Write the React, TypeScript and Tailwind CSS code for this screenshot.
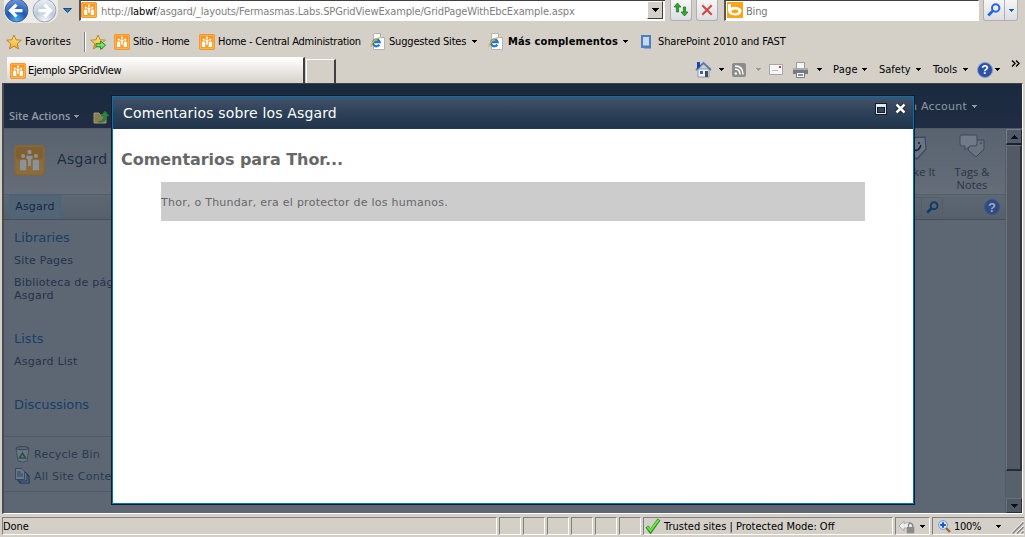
import React from "react";

const ui = "font-['DejaVu_Sans_Condensed','Liberation_Sans',sans-serif] text-[11px] leading-[14px]";
const verdana = "font-['DejaVu_Sans','Liberation_Sans',sans-serif]";

function Caret({ className = "" }: { className?: string }) {
  return (
    <svg width="5" height="3" viewBox="0 0 5 3" shapeRendering="crispEdges" className={`shrink-0 ${className}`}>
      <path d="M0 0h5v1H4v1H3v1H2V2H1V1H0z" fill="currentColor" />
    </svg>
  );
}

function SiteIcon({ size = 16, dim = false }: { size?: number; dim?: boolean }) {
  const edge = dim ? "#80653d" : "#ef8a18";
  const inner = dim ? "#8a6d3d" : "#f9a12c";
  const man = dim ? "#8c929a" : "#fff";
  return (
    <svg width={size} height={size} viewBox="0 0 30 30" className="shrink-0">
      <rect x="0.7" y="0.7" width="28.6" height="28.6" rx="3" fill={inner} stroke={edge} strokeWidth="1.5" />
      <rect x="2" y="2" width="26" height="12" rx="2" fill={dim ? "#80602f" : "#ff9420"} />
      {!dim && <rect x="2.6" y="2.6" width="24.8" height="24.8" rx="1" fill="none" stroke="#ffc56b" strokeWidth="1.2" />}
      <g fill={man}>
        <circle cx="15" cy="6.8" r="2.1" />
        <circle cx="8.8" cy="10.6" r="2" />
        <circle cx="21.2" cy="10.6" r="2" />
        <path d="M12 10.3h6v3l-1.6 1v6h-2.800v-6l-1.600-1z" />
        <path d="M5.800 16q0-1.800 1.800-1.800h2.400q1.800 0 1.800 1.800v8.500H5.800zM18.200 16q0-1.800 1.800-1.800h2.400q1.800 0 1.800 1.800v8.500h-6z" />
      </g>
    </svg>
  );
}

function Star({ plus = false }: { plus?: boolean }) {
  return (
    <svg width="16" height="16" viewBox="0 0 16 16" className="shrink-0">
      <defs>
        <linearGradient id="star" x1="0" y1="0" x2="0" y2="1">
          <stop offset="0" stopColor="#fff0a0" />
          <stop offset="1" stopColor="#f5a81c" />
        </linearGradient>
      </defs>
      <path d="M8 1l2 4.800 5.300.4-4 3.500 1.200 5.200L8 12.200l-4.500 2.700 1.200-5.200-4-3.500 5.300-.4z" fill="url(#star)" stroke="#bd7d1c" strokeWidth=".9" />
      {plus && <path d="M6 9.700h4.600V7L15.600 11.200 10.600 15.400v-2.700H6z" fill="#7be070" stroke="#1f8c25" />}
    </svg>
  );
}

function IePage() {
  return (
    <svg width="16" height="17" viewBox="0 0 16 17" className="shrink-0">
      <path d="M3.500.5h7l4 4v12h-11z" fill="#fff" stroke="#b4b4b4" />
      <path d="M10.500.5v4h4" fill="#ddd" stroke="#aaa" />
      <path d="M9.300 11.600A3.400 3.400 0 1 1 9.700 9.200H3.500" fill="none" stroke="#2078cf" strokeWidth="2.200" />
      <path d="M1.600 13.700C-.8 12 6 4.300 10.500 4.900" fill="none" stroke="#e6b22d" strokeWidth="1.300" />
    </svg>
  );
}

function NavButton({ back = false }: { back?: boolean }) {
  return (
    <svg width="25" height="24" viewBox="0 0 25 24" className="shrink-0">
      <defs>
        <radialGradient id="nb" cx=".5" cy=".95" r=".9">
          <stop offset="0" stopColor="#47b5f6" />
          <stop offset=".5" stopColor="#1d57b4" />
          <stop offset="1" stopColor="#6b93d4" />
        </radialGradient>
        <radialGradient id="nf" cx=".5" cy=".95" r=".9">
          <stop offset="0" stopColor="#f4f8fb" />
          <stop offset=".5" stopColor="#bdc9d7" />
          <stop offset="1" stopColor="#e8edf3" />
        </radialGradient>
      </defs>
      <circle cx="12.500" cy="10.500" r="11.400" fill={back ? "url(#nb)" : "url(#nf)"} stroke={back ? "#3e5c8f" : "#9aa5b3"} />
      <path
        d={back ? "M12.500 4.600L6.500 10.600l6 6M7.500 10.600h11" : "M12.500 4.600l6 6-6 6M17.500 10.600h-11"}
        fill="none"
        stroke="#fff"
        strokeWidth="3.200"
      />
    </svg>
  );
}

function Magnifier({ color, size = 14 }: { color: string; size?: number }) {
  return (
    <svg width={size} height={size} viewBox="0 0 14 14" className="shrink-0">
      <circle cx="8.700" cy="5" r="3.700" fill="none" stroke={color} strokeWidth="2" />
      <path d="M6 7.600L1.300 12.500" stroke={color} strokeWidth="2.800" />
    </svg>
  );
}

function HelpBadge({ dim = false }: { dim?: boolean }) {
  return (
    <span
      className={
        dim
          ? "flex h-4 w-4 items-center justify-center rounded-full border border-[#3b568b] bg-[#2d4a82] font-['Liberation_Sans',sans-serif] text-[13px] font-bold leading-none text-[#a0aabd]"
          : "flex h-4 w-4 items-center justify-center rounded-full border border-[#8da0c6] bg-[#2a50a8] font-['Liberation_Sans',sans-serif] text-[12px] font-bold leading-none text-white"
      }
    >
      ?
    </span>
  );
}

function AddressRow() {
  return (
    <div className="flex h-6 items-start">
      <div className="ml-1 flex h-[23px] w-[54px] rounded-b-[12px] bg-[#ecebe8]">
        <NavButton back />
        <span className="ml-[3px] flex"><NavButton /></span>
      </div>
      <svg width="9" height="5" viewBox="0 0 9 5" className="ml-[5px] mt-2">
        <path d="M.5.5h8l-4 4z" fill="#2b7fc0" stroke="#1b4d7d" />
      </svg>
      <div className="ml-[7px] flex h-[21px] w-[586px] items-start border-b border-l-2 border-b-white border-l-[#555] border-t border-t-[#404040] bg-white">
        <div className="mt-px flex"><SiteIcon /></div>
        <div className={`${ui} ml-[4px] mt-1 grow whitespace-nowrap tracking-[-0.128px] text-[#808080]`}>
          http://<span className="text-black">labwf</span>/asgard/_layouts/Fermasmas.Labs.SPGridViewExample/GridPageWithEbcExample.aspx
        </div>
        <div className="mr-[2px] flex h-[18px] w-4 items-center justify-center border border-b-[#404040] border-l-white border-r-[#404040] border-t-white bg-[#d4d0c8]">
          <svg width="7" height="4" viewBox="0 0 7 4" shapeRendering="crispEdges"><path d="M0 0h7v1H6v1H5v1H4v1H3V3H2V2H1V1H0z" /></svg>
        </div>
      </div>
      <div className="ml-[5px] flex h-[21px] w-[22px] items-center justify-center rounded-b-[3px] border border-t-0 border-[#aeb0b8] bg-gradient-to-b from-[#f6f6f6] to-[#dedee2]">
        <svg width="16" height="16" viewBox="0 0 16 16">
          <path d="M4.500 1L8 5H5.600v5H3.400V5H1z" fill="#2eaa2b" stroke="#17701a" strokeWidth=".7" />
          <path d="M11.500 14L15 10h-2.400V5h-2.200v5H8z" fill="#2eaa2b" stroke="#17701a" strokeWidth=".7" />
        </svg>
      </div>
      <div className="ml-[4px] flex h-[21px] w-[22px] items-center justify-center rounded-b-[3px] border border-t-0 border-[#aeb0b8] bg-gradient-to-b from-[#f6f6f6] to-[#dedee2]">
        <svg width="12" height="12" viewBox="0 0 12 12"><path d="M1.300 1.300l9.400 9.400M10.700 1.300L1.300 10.700" stroke="#d14a4a" strokeWidth="2.200" /></svg>
      </div>
      <div className="ml-[6px] flex h-[21px] w-[255px] items-start border-b border-l-2 border-r border-t border-b-white border-l-[#555] border-r-white border-t-[#404040] bg-white">
        <svg width="16" height="16" viewBox="0 0 16 16" className="ml-[1px] mt-px">
          <path d="M0 0h16v16H0z" fill="#ffa415" />
          <path d="M1 2h3v3.500Q8 4 11.500 5.500Q15 7 14.500 9.500Q13.500 13.500 8 13.500Q1 13 1 8z" fill="#fff" />
          <ellipse cx="8" cy="9.300" rx="3.400" ry="1.900" fill="#ffa415" />
        </svg>
        <span className={`${ui} ml-[3px] mt-1 tracking-[-0.2px] text-[#777]`}>Bing</span>
      </div>
      <div className="ml-[4px] flex h-[21px] w-[35px] rounded-b-[3px] border border-t-0 border-[#aeb0b8] bg-gradient-to-b from-[#f6f6f6] to-[#dedee2]">
        <span className="flex w-[21px] items-center justify-center border-r border-[#aeb0b8]"><Magnifier color="#2466df" /></span>
        <span className="flex grow items-center justify-center"><Caret className="text-[#1462b0]" /></span>
      </div>
    </div>
  );
}

function FavoritesRow() {
  return (
    <div className={`${ui} flex h-8 items-center whitespace-nowrap pl-[6px] pt-[3px]`}>
      <Star />
      <span className="ml-[3px] w-[59px] tracking-[0.15px]">Favorites</span>
      <span className="h-5 w-[2px] border-l border-r border-l-[#808080] border-r-white" />
      <span className="ml-[4px] flex"><Star plus /></span>
      <span className="ml-[8px] flex"><SiteIcon /></span>
      <span className="ml-[3px] w-[66px] pt-px tracking-[-0.38px]">Sitio - Home</span>
      <SiteIcon />
      <span className="ml-[3px] w-[152px] pt-px tracking-[-0.27px]">Home - Central Administration</span>
      <IePage />
      <span className="ml-[3px] w-[83px] pt-px tracking-[-0.18px]">Suggested Sites</span>
      <Caret />
      <span className="ml-[11px] flex"><IePage /></span>
      <span className="ml-[4px] w-[115px] pt-px font-bold tracking-[0.15px]">Más complementos</span>
      <Caret />
      <svg width="11" height="14" viewBox="0 0 11 14" className="ml-[13px]">
        <path d="M1 1h8v10.500H1z" fill="#c9d9ec" stroke="#4c7fbf" strokeWidth="2" />
        <path d="M3 11.500h7v2H3zM0 11h3v2H0z" fill="#4c7fbf" />
      </svg>
      <span className="ml-[6px] pt-px tracking-[-0.1px]">SharePoint 2010 and FAST</span>
    </div>
  );
}

function TabRow() {
  return (
    <div className={`${ui} flex h-[27px] items-end whitespace-nowrap pl-[7px]`}>
      <div className="flex h-[26px] w-[298px] items-center border-r-2 border-t border-r-[#404040] border-t-white bg-gradient-to-b from-white to-[#d6d2ca] pl-[3px]">
        <SiteIcon />
        <span className="ml-[2px] pt-px tracking-[-0.35px]">Ejemplo SPGridView</span>
      </div>
      <div className="ml-[1px] h-6 w-[30px] border-l border-r-2 border-t border-l-white border-r-[#404040] border-t-white" />
      <div className="ml-auto flex h-[27px] items-center">
        <svg width="17" height="17" viewBox="0 0 17 17">
          <path d="M3 8h11v8H3z" fill="#eef2f7" stroke="#8b97a8" />
          <path d="M1 9L8.500 2 16 9" fill="none" stroke="#5879ae" strokeWidth="1.800" />
          <path d="M2 1h3v5l-3 2z" fill="#1b42b8" />
          <path d="M5 10h3v3H5z" fill="#3262bd" /><path d="M10 10h3v6h-3z" fill="#36516d" />
        </svg>
        <Caret className="ml-[7px]" />
        <svg width="14" height="14" viewBox="0 0 14 14" className="ml-[8px]">
          <rect width="14" height="14" rx="2" fill="#8c8c8c" />
          <path d="M3 6q5 0 5 5.500M3 3q8 0 8 8.500" fill="none" stroke="#fff" strokeWidth="1.500" /><circle cx="3.800" cy="10.500" r="1.200" fill="#fff" />
        </svg>
        <Caret className="ml-[10px] text-[#999]" />
        <svg width="14" height="11" viewBox="0 0 14 11" className="ml-[8px]">
          <path d="M.5.5h13v10H.5z" fill="#f8f8f8" stroke="#a5a5a5" /><path d="M10 2h2v2h-2z" fill="#d33" /><path d="M3 6.500h6" stroke="#bbb" />
        </svg>
        <svg width="17" height="16" viewBox="0 0 17 16" className="ml-[9px]">
          <path d="M4.500.5h8V7h-8z" fill="#f5f5f5" stroke="#999" />
          <path d="M1 6h15v6H1z" fill="#77797f" /><path d="M1 6h15v2H1z" fill="#a9abb0" />
          <path d="M4.500 10.500h8v5h-8z" fill="#fff" stroke="#777" /><path d="M6 12h5v2H6z" fill="#5b9fb0" />
        </svg>
        <Caret className="ml-[8px]" />
        <span className="ml-[11px] w-[29px] tracking-[0.2px]">Page</span><Caret />
        <span className="ml-[12px] w-[37px]">Safety</span><Caret />
        <span className="ml-[12px] w-[30px]">Tools</span><Caret />
        <span className="ml-[9px]"><HelpBadge /></span>
        <Caret className="ml-[2px]" />
        <svg width="9" height="7" viewBox="0 0 9 7" className="mb-3 ml-[11px] mr-[5px]"><path d="M1 .5l3 3-3 3M5 .5l3 3-3 3" fill="none" stroke="#000" strokeWidth="1.400" /></svg>
      </div>
    </div>
  );
}

function SideNav() {
  return (
    <div className={`${verdana} flex w-[200px] flex-col whitespace-nowrap text-[11px] leading-[13px] tracking-[0.23px] text-[#24324a]`}>
      <div className="mt-[10px] pl-[10px] text-[13px] leading-4 tracking-[-0.05px] text-[#163f67]">Libraries</div>
      <div className="mt-[8px] pl-[10px]">Site Pages</div>
      <div className="mt-[9px] pl-[10px]">Biblioteca de páginas<br />Asgard</div>
      <div className="mt-[29px] pl-[10px] text-[13px] leading-4 tracking-normal text-[#163f67]">Lists</div>
      <div className="mt-[8px] pl-[10px]">Asgard List</div>
      <div className="mt-[29px] pl-[10px] text-[13px] leading-4 tracking-[-0.08px] text-[#163f67]">Discussions</div>
      <div className="mt-[23px] flex h-[56px] flex-col border-b border-t border-[#505b66] pl-[11px] pt-[6px] text-[#29394e]">
        <div className="flex h-[22px] items-center">
          <svg width="15" height="17" viewBox="0 0 15 17" className="mr-[4px]">
            <path d="M1 2h13l-2 13q-4 2-9 0z" fill="#6b7684" stroke="#43505f" /><ellipse cx="7.500" cy="2.200" rx="6.300" ry="1.600" fill="#5d6773" stroke="#344352" />
            <path d="M4.500 12l3-5 3 5z" fill="none" stroke="#24543f" strokeWidth="1.600" />
          </svg>
          Recycle Bin
        </div>
        <div className="flex h-[22px] items-center">
          <svg width="15" height="16" viewBox="0 0 15 16" className="mr-[4px]">
            <path d="M5 5h6l3 3v7H5z" fill="#64748a" stroke="#1d3555" strokeWidth="1.200" /><path d="M3 3h6l3 3v7H3z" fill="#64748a" stroke="#1d3555" />
            <path d="M.5.5h6l3 3v8h-9z" fill="#6d7989" stroke="#344962" /><path d="M2 4h4M2 6h6M2 8h6" stroke="#284463" />
          </svg>
          All Site Content
        </div>
      </div>
    </div>
  );
}

function ScrollBar() {
  return (
    <div className="flex w-[17px] shrink-0 flex-col border-l border-[#555c66] bg-[#56606c]">
      <div className="flex h-4 items-center justify-center border border-b-2 border-b-[#172332] border-l-[#74808c] border-r-[#1e2935] border-t-[#74808c] bg-[#515a66]">
        <svg width="7" height="4" viewBox="0 0 7 4" shapeRendering="crispEdges"><path d="M3 0h1v1h1v1h1v1h1v1H0V3h1V2h1V1h1z" fill="#07111b" /></svg>
      </div>
      <div className="h-[326px] border border-b-2 border-r-2 border-b-[#222e3d] border-l-[#68727f] border-r-[#2a3543] border-t-[#68727f] bg-[#535a66]" />
      <div className="grow bg-[#57616c]" />
      <div className="flex h-[15px] items-center justify-center border border-b-[#222e3d] border-l-[#68727f] border-r-[#222e3d] border-t-[#68727f] bg-[#4f5964]">
        <svg width="7" height="4" viewBox="0 0 7 4" shapeRendering="crispEdges"><path d="M0 0h7v1H6v1H5v1H4v1H3V3H2V2H1V1H0z" fill="#07111b" /></svg>
      </div>
    </div>
  );
}

function SitePage() {
  return (
    <div className="flex h-full flex-col overflow-hidden bg-[#5d6773]">
      <div className="flex h-11 items-start justify-between bg-gradient-to-b from-[#192a3e] to-[#202c43] text-[#8f98a3]">
        <div className="flex pl-[5px] pt-[25px] font-['Open_Sans',sans-serif] text-[11px] font-semibold leading-[14px]">
          <span className="w-[65px] whitespace-nowrap tracking-[-0.05px]">Site Actions</span>
          <Caret className="mt-[6px]" />
          <svg width="17" height="14" viewBox="0 0 17 14" className="ml-[14px] mt-px">
            <path d="M1 3h5l1 2h6v8H1z" fill="#858052" stroke="#a0996c" /><path d="M5 12q6-1 6-6H8l4-5 4 5h-2q0 7-9 6z" fill="#27853c" stroke="#316d43" strokeWidth=".6" />
          </svg>
        </div>
        <div className={`${verdana} flex items-center pr-[45px] pt-[15px] text-[11px] leading-[15px] tracking-[0.24px]`}>
          <span className="mr-[5px]">System Account</span><Caret />
        </div>
      </div>
      <div className="flex min-h-0 grow border-t border-[#515b66]">
        <div className="flex min-w-0 grow flex-col">
          <div className="flex h-[65px] shrink-0 justify-between bg-gradient-to-b from-[#59636f] to-[#646d78]">
            <div className="flex items-start pl-[10px] pt-4">
              <SiteIcon size={31} dim />
              <span className={`${verdana} ml-[12px] mt-[5px] text-[14px] leading-[18px] tracking-[0.3px] text-[#1c2c43]`}>Asgard</span>
            </div>
            <div className="flex font-['Open_Sans',sans-serif] text-[11px] leading-[13px] text-[#293343]">
              <div className="flex w-[44px] flex-col items-center pt-[4px]">
                <svg width="28" height="28" viewBox="0 0 28 28"><path d="M3 5l19-1 1 12-9 10-11-9z" fill="#697583" stroke="#3e4b60" strokeWidth="1.300" /><path d="M8 15q7 6 10-3" fill="none" stroke="#172234" strokeWidth="1.600" /><circle cx="16" cy="10" r="1" fill="#172234" /></svg>
                <span className="mt-[4px] tracking-[0.1px]">I Like It</span>
              </div>
              <div className="flex w-[66px] flex-col items-center pt-[5px] text-center">
                <svg width="26" height="25" viewBox="0 0 26 25"><path d="M12 6h13v9l-8 8-8-7z" fill="#687481" stroke="#3a475c" /><circle cx="22" cy="9" r="1.200" fill="#46536a" /><path d="M3 1h13q2 0 2 2v7q0 2-2 2h-5l-5 4v-4H3q-2 0-2-2V3q0-2 2-2z" fill="#707b87" stroke="#3c495e" /></svg>
                <span className="mt-[6px] leading-[13px] tracking-[0.1px]">Tags &amp;<br />Notes</span>
              </div>
            </div>
          </div>
          <div className="flex h-[26px] shrink-0 items-stretch justify-between border-b border-t border-b-[#414e5e] border-t-[#555f6a] bg-gradient-to-b from-[#5e6873] to-[#56606c]">
            <div className={`${verdana} ml-[5px] flex w-[52px] items-center justify-center border border-b-0 border-[#416783] bg-[#526577] text-[11px] tracking-[0.23px] text-[#16283e]`}>Asgard</div>
            <div className="flex items-center">
              <div className="h-5 w-[80px] border border-r-0 border-[#535e69]" />
              <div className="flex h-5 w-[22px] items-center justify-center border border-[#535e69]"><Magnifier color="#0f3b65" size={13} /></div>
              <div className="ml-[41px] mr-[5px]"><HelpBadge dim /></div>
            </div>
          </div>
          <SideNav />
        </div>
        <ScrollBar />
      </div>
    </div>
  );
}

function Dialog() {
  return (
    <div className={`${verdana} absolute left-[107px] top-[11px] flex h-[410px] w-[804px] flex-col border border-[#101d2c] bg-white`}>
      <div className="flex grow flex-col border border-[#0072bc]">
        <div className="flex h-8 shrink-0 items-center justify-between bg-gradient-to-b from-[#43546a] via-[#2c4058] to-[#20344b] pl-[10px] pr-[7px] text-white">
          <h1 className="text-[14px] leading-[18px] tracking-[0.15px]">Comentarios sobre los Asgard</h1>
          <div className="mb-[9px] flex items-center gap-[8px]">
            <svg width="12" height="12" viewBox="0 0 12 12" shapeRendering="crispEdges"><path d="M0 0h12v12H0z" fill="#101c2b" /><path d="M1 1h10v10H1z" fill="#e4e6e9" /><path d="M2 4h8v6H2z" fill="#101c2b" /><path d="M3 5h6v4H3z" fill="#34475e" /></svg>
            <svg width="11" height="11" viewBox="0 0 11 11"><path d="M1.500 1.500l8 8M9.500 1.500l-8 8" stroke="#0d1a29" strokeWidth="4.200" /><path d="M1.500 1.500l8 8M9.500 1.500l-8 8" stroke="#fff" strokeWidth="2.500" /></svg>
          </div>
        </div>
        <h2 className="ml-2 mt-[21px] text-[16px] font-bold leading-5 tracking-[-0.05px] text-[#676767]">Comentarios para Thor...</h2>
        <div className="ml-12 mt-3 flex h-[39px] w-[704px] items-center bg-[#ccc] pt-[2px] text-[11px] leading-[14px] tracking-[0.25px] text-[#676767]">
          Thor, o Thundar, era el protector de los humanos.
        </div>
      </div>
    </div>
  );
}

const cell = "h-[18px] shrink-0 border border-b-white border-l-[#808080] border-r-white border-t-[#808080]";

function StatusBar() {
  return (
    <div className={`${ui} flex h-[23px] gap-[2px] whitespace-nowrap pl-[2px] pt-[3px]`}>
      <div className={`${cell} w-[495px] pt-[2px] tracking-[-0.1px]`}>Done</div>
      {[0, 1, 2, 3, 4, 5].map((i) => <div key={i} className={`${cell} w-[22px]`} />)}
      <div className={`${cell} flex w-[250px] items-center`}>
        <svg width="16" height="16" viewBox="0 0 16 16" className="ml-[1px]"><path d="M2 8.500l3.500 5L14 1.500" fill="none" stroke="#319523" strokeWidth="3.600" /><path d="M2.500 9l3 3.500L13.500 2" fill="none" stroke="#6fe64c" strokeWidth="1.900" /></svg>
        <span className="ml-[3px] pt-[2px]">Trusted sites | Protected Mode: Off</span>
      </div>
      <div className={`${cell} flex w-[35px] items-center pl-[2px]`}>
        <svg width="17" height="15" viewBox="0 0 17 15"><path d="M1 7l5-5v3q5-4 10 2v7H9V9L6 9v3z" fill="#eee" stroke="#aaa" /><path d="M9 8h7v6H9z" fill="#8b8b8b" /><path d="M10.500 8V5.500q2-2.500 4 0V8" fill="none" stroke="#888" strokeWidth="1.300" /></svg>
        <Caret className="ml-[5px]" />
      </div>
      <div className={`${cell} flex w-[92px] items-center border-r-0 pl-[5px]`}>
        <svg width="13" height="13" viewBox="0 0 13 13"><path d="M8 8l4 4" stroke="#a06435" strokeWidth="2.400" /><circle cx="5" cy="5" r="4.300" fill="#dcecff" stroke="#6f98cd" /><path d="M5 2.200v5.600M2.200 5h5.600" stroke="#1459d0" strokeWidth="2" /></svg>
        <span className="ml-[3px] w-[42px] pt-px tracking-[-0.3px]">100%</span>
        <Caret />
        <svg width="13" height="13" viewBox="0 0 13 13" className="ml-auto mt-[3px]"><path d="M0 12.500L12.500 0M4.500 12.500L12.500 4.500M9 12.500l3.500-3.500" stroke="#fff" /><path d="M1.500 12.500L12.500 1.500M6 12.500l6.500-6.500M10.500 12.500l2-2" stroke="#808080" strokeWidth="1.300" /></svg>
      </div>
    </div>
  );
}

export default function App() {
  return (
    <div className="flex h-[537px] w-[1025px] flex-col overflow-hidden bg-[#d4d0c8] text-black">
      <AddressRow />
      <FavoritesRow />
      <TabRow />
      <main className="relative ml-[2px] h-[431px] w-[1021px] shrink-0 border-b border-l-2 border-r border-t border-b-white border-l-[#484b4f] border-r-white border-t-[#404040]">
        <SitePage />
        <Dialog />
      </main>
      <StatusBar />
    </div>
  );
}
